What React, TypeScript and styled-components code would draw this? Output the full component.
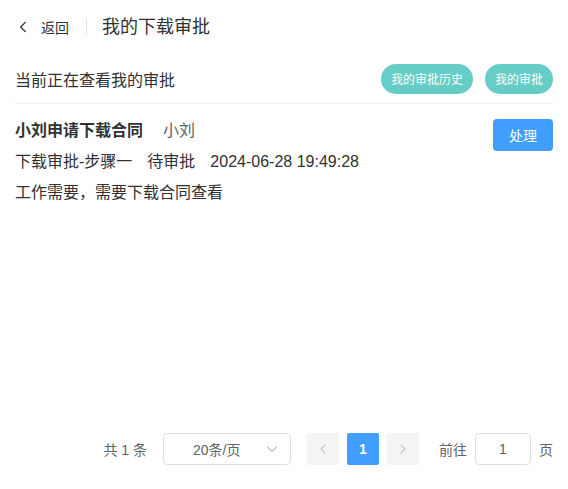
import styled, { createGlobalStyle } from 'styled-components';

const GlobalStyle = createGlobalStyle`
  html, body {
    margin: 0;
    padding: 0;
    background: #fff;
  }
  body {
    font-family: "Liberation Sans", "Noto Sans CJK SC", sans-serif;
    color: #303133;
  }
  * {
    box-sizing: border-box;
  }
`;

const Page = styled.div`
  height: 100vh;
  display: flex;
  flex-direction: column;
  padding: 0 15px 24px;
`;

const PageHeader = styled.div`
  height: 54px;
  display: flex;
  align-items: center;
  padding-left: 1px;
`;

const Back = styled.div`
  display: flex;
  align-items: center;
  gap: 11px;
  font-size: 14px;
  color: #303133;
  cursor: pointer;
`;

const Divider = styled.span`
  width: 1px;
  height: 16px;
  background: #dcdfe6;
  margin: 0 15px 0 17px;
`;

const Title = styled.div`
  font-size: 18px;
  line-height: 24px;
  color: #303133;
`;

const Toolbar = styled.div`
  height: 50px;
  display: flex;
  align-items: center;
  justify-content: space-between;
  border-bottom: 1px solid #ebeef5;
`;

const ToolbarText = styled.div`
  font-size: 16px;
  color: #303133;
`;

const ToolbarActions = styled.div`
  display: flex;
  gap: 12px;
`;

const RoundButton = styled.button`
  height: 30px;
  padding: 0 10px;
  border: none;
  border-radius: 15px;
  background: #66cdc6;
  color: #fff;
  font-size: 12px;
  font-family: inherit;
  cursor: pointer;
`;

const Item = styled.div`
  display: flex;
  justify-content: space-between;
  align-items: flex-start;
  padding-top: 15px;
`;

const ItemBody = styled.div`
  display: flex;
  flex-direction: column;
  gap: 7px;
`;

const Line = styled.div`
  font-size: 16px;
  line-height: 24px;
  color: #303133;
  display: flex;
`;

const ItemTitle = styled.span`
  font-weight: 700;
  margin-right: 20px;
`;

const Muted = styled.span`
  color: #606266;
`;

const Field = styled.span`
  margin-right: 15px;
`;

const PrimaryButton = styled.button`
  width: 60px;
  height: 32px;
  border: none;
  border-radius: 4px;
  background: #409eff;
  color: #fff;
  font-size: 14px;
  font-family: inherit;
  cursor: pointer;
`;

const Pagination = styled.div`
  margin-top: auto;
  display: flex;
  justify-content: flex-end;
  align-items: center;
  font-size: 14px;
  color: #606266;
`;

const Total = styled.span`
  margin-right: 16px;
`;

const Select = styled.div`
  width: 128px;
  height: 32px;
  border: 1px solid #dcdfe6;
  border-radius: 4px;
  display: flex;
  align-items: center;
  justify-content: space-between;
  padding: 0 12px 0 29px;
  margin-right: 16px;
  color: #606266;
`;

const PagerButton = styled.button<{ $active?: boolean }>`
  width: 32px;
  height: 32px;
  border: none;
  border-radius: 2px;
  margin-right: 8px;
  display: flex;
  align-items: center;
  justify-content: center;
  font-family: inherit;
  font-size: 14px;
  font-weight: 700;
  background: ${p => (p.$active ? '#409eff' : '#f4f4f5')};
  color: ${p => (p.$active ? '#fff' : '#c0c4cc')};
`;

const Jumper = styled.div`
  display: flex;
  align-items: center;
  margin-left: 12px;
  gap: 8px;
`;

const JumpInput = styled.div`
  width: 56px;
  height: 32px;
  border: 1px solid #dcdfe6;
  border-radius: 4px;
  display: flex;
  align-items: center;
  justify-content: center;
  color: #606266;
`;

const Chevron = ({ dir, size = 12, color = 'currentColor' }: { dir: 'left' | 'right' | 'down'; size?: number; color?: string }) => {
  const d = dir === 'left' ? 'M8 2 L4 6 L8 10' : dir === 'right' ? 'M4 2 L8 6 L4 10' : 'M1.5 4 L6 8.5 L10.5 4';
  return (
    <svg width={size} height={size} viewBox="0 0 12 12" fill="none">
      <path d={d} stroke={color} strokeWidth="1.1" strokeLinecap="round" strokeLinejoin="round" />
    </svg>
  );
};

export default function App() {
  return (
    <>
      <GlobalStyle />
      <Page>
        <PageHeader>
          <Back>
            <Chevron dir="left" size={14} color="#303133" />
            <span>返回</span>
          </Back>
          <Divider />
          <Title>我的下载审批</Title>
        </PageHeader>
        <Toolbar>
          <ToolbarText>当前正在查看我的审批</ToolbarText>
          <ToolbarActions>
            <RoundButton>我的审批历史</RoundButton>
            <RoundButton>我的审批</RoundButton>
          </ToolbarActions>
        </Toolbar>
        <Item>
          <ItemBody>
            <Line>
              <ItemTitle>小刘申请下载合同</ItemTitle>
              <Muted>小刘</Muted>
            </Line>
            <Line>
              <Field>下载审批-步骤一</Field>
              <Field>待审批</Field>
              <span>2024-06-28 19:49:28</span>
            </Line>
            <Line>工作需要，需要下载合同查看</Line>
          </ItemBody>
          <PrimaryButton>处理</PrimaryButton>
        </Item>
        <Pagination>
          <Total>共 1 条</Total>
          <Select>
            <span>20条/页</span>
            <Chevron dir="down" size={12} color="#c0c4cc" />
          </Select>
          <PagerButton>
            <Chevron dir="left" size={12} />
          </PagerButton>
          <PagerButton $active>1</PagerButton>
          <PagerButton>
            <Chevron dir="right" size={12} />
          </PagerButton>
          <Jumper>
            <span>前往</span>
            <JumpInput>1</JumpInput>
            <span>页</span>
          </Jumper>
        </Pagination>
      </Page>
    </>
  );
}
